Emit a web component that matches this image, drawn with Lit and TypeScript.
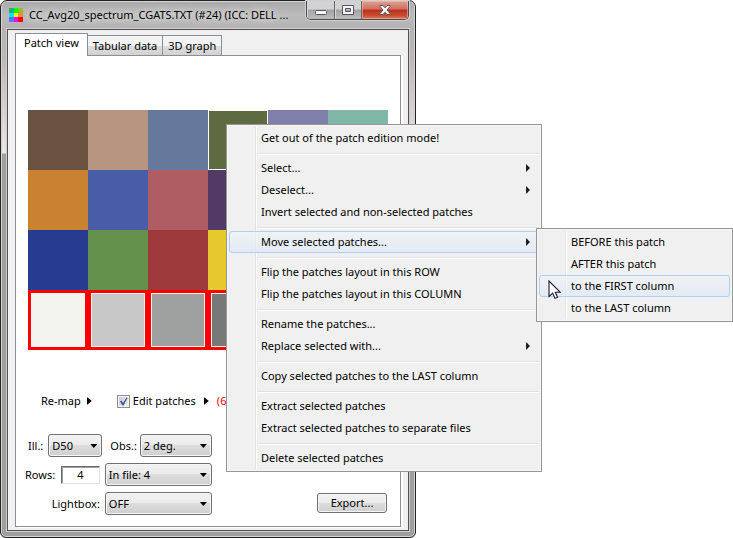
import { LitElement, html, css, svg, nothing } from "lit";
import { customElement, property } from "lit/decorators.js";
import { classMap } from "lit/directives/class-map.js";
import { styleMap } from "lit/directives/style-map.js";

interface MenuEntry {
  label: string;
  sub?: boolean;
  hot?: boolean;
  children?: MenuEntry[];
}

const MENU: MenuEntry[][] = [
  [{ label: "Get out of the patch edition mode!" }],
  [
    { label: "Select...", sub: true },
    { label: "Deselect...", sub: true },
    { label: "Invert selected and non-selected patches" },
  ],
  [
    {
      label: "Move selected patches...",
      sub: true,
      hot: true,
      children: [
        { label: "BEFORE this patch" },
        { label: "AFTER this patch" },
        { label: "to the FIRST column", hot: true },
        { label: "to the LAST column" },
      ],
    },
  ],
  [
    { label: "Flip the patches layout in this ROW" },
    { label: "Flip the patches layout in this COLUMN" },
  ],
  [{ label: "Rename the patches..." }, { label: "Replace selected with...", sub: true }],
  [{ label: "Copy selected patches to the LAST column" }],
  [{ label: "Extract selected patches" }, { label: "Extract selected patches to separate files" }],
  [{ label: "Delete selected patches" }],
];

const PATCHES: string[] = [
  "#6a5140", "#b79580", "#64799c", "#5e6b40", "#807fac", "#80b7a9",
  "#c88230", "#495ca8", "#af5d63", "#523a65", "#a1b852", "#dd9f3a",
  "#273c90", "#63914b", "#9d393b", "#e6c92c", "#b4578f", "#3085a3",
  "#f3f4ee", "#c8c8c8", "#9fa1a0", "#777978", "#535454", "#343434",
];
const CURSOR_PATCH = 3;
const FIRST_SELECTED = 18;

const baseText = css`
  :host {
    font: 11px/16px "Noto Sans", "Open Sans", sans-serif;
    color: #000;
  }
  * {
    box-sizing: border-box;
  }
  button,
  input,
  select {
    font: inherit;
    color: inherit;
    margin: 0;
  }
`;

@customElement("context-menu")
export class ContextMenu extends LitElement {
  @property({ attribute: false }) groups: MenuEntry[][] = [];

  static styles = [
    baseText,
    css`
      :host {
        display: block;
      }
      .menu {
        margin: 0;
        padding: 2px;
        list-style: none;
        border: 1px solid #979797;
        background: linear-gradient(90deg, transparent 26px, #e2e3e3 26px 27px, #fff 27px 28px, transparent 28px)
            content-box,
          #f0f0f0;
        box-shadow: inset 0 0 0 1px #f5f5f5;
      }
      .row {
        position: relative;
      }
      .sep {
        height: 8px;
        padding: 4px 0 2px 28px;
      }
      .sep hr {
        height: 2px;
        margin: 0;
        border: 0;
        border-top: 1px solid #e0e0e0;
        background: #fff;
      }
      .item {
        display: flex;
        align-items: center;
        justify-content: space-between;
        width: 100%;
        height: 22px;
        padding: 0 8px 0 31px;
        border: 1px solid transparent;
        border-radius: 3px;
        background: none;
        text-align: left;
        white-space: nowrap;
      }
      .hot {
        border-color: #aecff7;
        background: linear-gradient(rgba(241, 243, 246, 0.7), rgba(222, 232, 246, 0.7));
      }
      .arrow {
        width: 4px;
        height: 8px;
        background: #1c1c1c;
        clip-path: polygon(0 0, 100% 50%, 0 100%);
      }
      .flyout {
        position: absolute;
        top: -3px;
        left: calc(100% - 3px);
        width: 197px;
      }
      .cursor {
        position: absolute;
        left: 9px;
        top: 5px;
        width: 13px;
        height: 20px;
      }
    `,
  ];

  private entry(e: MenuEntry, nested: boolean): unknown {
    return html`<li class="row" role="none">
      <button
        type="button"
        role="menuitem"
        aria-haspopup=${e.sub ? "menu" : nothing}
        class=${classMap({ item: true, hot: !!e.hot })}
      >
        ${e.label}${e.sub ? html`<span class="arrow"></span>` : nothing}
      </button>
      ${nested && e.hot
        ? html`<svg class="cursor" viewBox="0 0 13 20" aria-hidden="true">
            <path
              d="M1 1V16.5L4.7 13.1L7 18.4L9.6 17.3L7.3 12.2H12.1Z"
              fill="#fff"
              stroke="#1a1a2a"
              stroke-width="1.1"
            />
          </svg>`
        : nothing}
      ${e.children
        ? html`<ul class="menu flyout" role="menu">
            ${e.children.map((c) => this.entry(c, true))}
          </ul>`
        : nothing}
    </li>`;
  }

  render() {
    return html`<ul class="menu" role="menu">
      ${this.groups.map(
        (g, i) => html`${i ? html`<li class="sep" role="none"><hr /></li>` : nothing}
        ${g.map((e) => this.entry(e, false))}`,
      )}
    </ul>`;
  }
}

const LOGO = ["#1cb37c", "#00ff00", "#8fc31f", "#00e5ff", "#ffff00", "#ff8a3c", "#4f7cff", "#ff00ff", "#ff0000"];

@customElement("app-root")
export class AppRoot extends LitElement {
  static styles = [
    baseText,
    css`
      :host {
        display: block;
        position: relative;
        min-height: 100vh;
        background: #fff;
      }
      .window {
        width: 100%;
        max-width: 416px;
        padding: 0 6px 6px;
        border: 1px solid #222;
        border-radius: 7px 7px 6px 6px;
        background: linear-gradient(
          #a9a9a9 0,
          #bcbcbc 14px,
          #b4b2b2 28px,
          #bdb9b9 60px,
          #ebe7e7 152px,
          #a19e9e 153px
        );
        box-shadow: inset 0 0 0 1px #d6d6d6;
      }
      .title {
        display: flex;
        align-items: flex-start;
        height: 28px;
      }
      .logo {
        width: 14px;
        height: 14px;
        margin: 7px 6px 0 2px;
        flex: none;
      }
      .caption {
        flex: 1;
        min-width: 0;
        margin: 0;
        padding-top: 6px;
        font-size: 11px;
        font-weight: 400;
        white-space: nowrap;
        text-shadow: 0 0 8px #e8e8e8, 0 0 6px #e0e0e0;
      }
      .controls {
        display: flex;
        height: 19px;
        flex: none;
        border: 1px solid #4a4a52;
        border-top: 0;
        border-radius: 0 0 5px 5px;
        overflow: hidden;
        box-shadow: 0 0 0 1px #d0d0d0;
      }
      .ctl {
        display: flex;
        align-items: center;
        justify-content: center;
        width: 28px;
        padding: 0;
        border: 0;
        border-right: 1px solid #65656c;
        background: linear-gradient(#d2d2d2 0 45%, #a3a3a5 50%, #bcbcbe);
        box-shadow: inset 1px 0 0 #d8d8d8;
      }
      .max {
        width: 27px;
      }
      .close {
        width: 46px;
        border: 0;
        background: linear-gradient(#dfa093, #cf6f5c 45%, #b8301a 50%, #cc4a30 80%, #dc7c62);
        box-shadow: inset 0 0 0 1px rgba(255, 200, 190, 0.5);
      }
      .glyph {
        width: 14px;
        height: 12px;
      }
      .client {
        padding: 3px 7px 3px;
        border: 1px solid #4f504f;
        background: #f0f0f0;
        box-shadow: 0 0 0 1px #cfcfcf;
      }
      .tabs {
        display: flex;
        align-items: flex-end;
      }
      .tab {
        height: 20px;
        padding: 0 5px;
        border: 1px solid #8c8e96;
        border-bottom: 0;
        border-left-width: 0;
        background: linear-gradient(#f3f3f3 0 50%, #dedede 50%, #d2d2d2);
        white-space: nowrap;
      }
      .tab.on {
        position: relative;
        height: 23px;
        margin-bottom: -1px;
        padding: 0 8px 4px;
        border-left-width: 1px;
        background: #fff;
      }
      .panel {
        padding: 54px 12px 11px;
        border: 1px solid #8c8e96;
        background: #fff;
        box-shadow: 2px 1px 0 #fff;
      }
      .patches {
        display: grid;
        grid-template-columns: repeat(6, 1fr);
      }
      .patch {
        aspect-ratio: 1;
      }
      .patch.current {
        border: 1px solid #fff;
      }
      .patch.selected {
        border: 3px solid #f00;
        box-shadow: inset 0 0 0 1px #f6f6f2;
      }
      .modes {
        display: flex;
        align-items: center;
        height: 16px;
        margin: 43px 0 25px 13px;
      }
      .popup {
        display: flex;
        align-items: center;
        gap: 6px;
        padding: 0;
        border: 0;
        background: none;
      }
      .popup::after {
        content: "";
        width: 5px;
        height: 8px;
        background: #000;
        clip-path: polygon(0 0, 100% 50%, 0 100%);
      }
      .options {
        gap: 0;
      }
      .edit {
        display: flex;
        align-items: center;
        gap: 3px;
        margin: 0 8px 0 25px;
      }
      .tick {
        position: relative;
        display: flex;
      }
      .check {
        appearance: none;
        width: 13px;
        height: 13px;
        border: 1px solid #8e8f8f;
        background: linear-gradient(135deg, #c4c9d0, #f4f4f6);
        box-shadow: inset 0 0 0 1px #f4f4f4;
      }
      .mark {
        position: absolute;
        inset: 0;
        width: 13px;
        height: 13px;
        pointer-events: none;
      }
      .count {
        margin-left: 8px;
        color: #f00;
      }
      .footer {
        display: flex;
        align-items: flex-end;
        justify-content: space-between;
      }
      .fields {
        display: grid;
        gap: 6px;
        width: 185px;
        margin-left: -3px;
        padding-right: 2px;
      }
      .line {
        display: flex;
        align-items: center;
        justify-content: flex-end;
        gap: 5px;
      }
      .lead {
        flex: 1;
        padding-left: 3px;
      }
      .rows {
        flex: 1;
      }
      .drop {
        position: relative;
        flex: none;
      }
      .drop::after {
        content: "";
        position: absolute;
        right: 5px;
        top: 10px;
        width: 7px;
        height: 4px;
        background: #000;
        clip-path: polygon(0 0, 100% 0, 50% 100%);
        pointer-events: none;
      }
      .sel {
        display: block;
        appearance: none;
        width: 100%;
        height: 23px;
        padding: 0 14px 0 3px;
        border: 1px solid #707070;
        border-radius: 3px;
        background: linear-gradient(#f2f2f2, #ebebeb 48%, #dddddd 50%, #cfcfcf);
        box-shadow: inset 0 0 0 1px #f6f6f6;
      }
      .s {
        width: 54px;
      }
      .m {
        width: 72px;
      }
      .l {
        width: 107px;
      }
      .obs {
        margin-left: 3px;
        flex: none;
        margin-right: -2px;
      }
      .num {
        width: 39px;
        height: 18px;
        padding: 0;
        border: 1px solid #e3e3e3;
        border-top: 1px solid #696969;
        border-left: 1px solid #696969;
        box-shadow: inset 1px 1px 0 #a0a0a0;
        text-align: center;
      }
      .export {
        width: 70px;
        height: 20px;
        padding: 0;
        margin: 0 1px 2px 0;
        border: 1px solid #707070;
        border-radius: 3px;
        background: linear-gradient(#f2f2f2, #ebebeb 48%, #dddddd 50%, #cfcfcf);
        box-shadow: inset 0 0 0 1px #f6f6f6;
        line-height: 16px;
      }
      .floating {
        position: absolute;
        left: 226px;
        top: 124px;
        width: 316px;
      }
    `,
  ];

  render() {
    return html`
      <main class="window">
        <header class="title">
          <svg class="logo" viewBox="0 0 15 15" shape-rendering="crispEdges" aria-hidden="true">
            ${LOGO.map(
              (c, i) => svg`<rect x=${(i % 3) * 5} y=${Math.floor(i / 3) * 5} width="5" height="5" fill=${c} />`,
            )}
          </svg>
          <h1 class="caption">CC_Avg20_spectrum_CGATS.TXT (#24) (ICC: DELL ...</h1>
          <div class="controls">
            <button type="button" class="ctl" aria-label="Minimize">
              <svg class="glyph" viewBox="0 0 14 12">
                <rect x="1.5" y="6.5" width="11" height="4" rx="1" fill="#f6f6f6" stroke="#555560" />
              </svg>
            </button>
            <button type="button" class="ctl max" aria-label="Maximize">
              <svg class="glyph" viewBox="0 0 14 12">
                <path
                  d="M1.5 1.5H12.5V10.5H1.5ZM4.5 4.5V7.5H9.5V4.5Z"
                  fill="#f6f6f6"
                  fill-rule="evenodd"
                  stroke="#555560"
                />
              </svg>
            </button>
            <button type="button" class="ctl close" aria-label="Close">
              <svg class="glyph" viewBox="0 0 14 12">
                <path
                  d="M2 1.5H5L7 3.8L9 1.5H12V2.5L9 6L12 9.5V10.5H9L7 8.2L5 10.5H2V9.5L5 6L2 2.5Z"
                  fill="#f6f6f6"
                  stroke="#555560"
                />
              </svg>
            </button>
          </div>
        </header>
        <section class="client">
          <div class="tabs" role="tablist">
            <button type="button" class="tab on" role="tab" aria-selected="true">Patch view</button>
            <button type="button" class="tab" role="tab">Tabular data</button>
            <button type="button" class="tab" role="tab">3D graph</button>
          </div>
          <div class="panel" role="tabpanel">
            <div class="patches">
              ${PATCHES.map(
                (c, i) => html`<div
                  class=${classMap({ patch: true, current: i === CURSOR_PATCH, selected: i >= FIRST_SELECTED })}
                  style=${styleMap({ backgroundColor: c })}
                ></div>`,
              )}
            </div>
            <div class="modes">
              <button type="button" class="popup">Re-map</button>
              <div class="edit">
                <span class="tick">
                  <input type="checkbox" class="check" id="edit" checked />
                  <svg class="mark" viewBox="0 0 13 13" aria-hidden="true">
                    <path d="M3 6.5L4.5 5.5L6 8L9.5 2.5L10.5 3L6.5 10.5H5.5Z" fill="#3f5596" />
                  </svg>
                </span>
                <label for="edit">Edit patches</label>
              </div>
              <button type="button" class="popup options" aria-label="Edit patches options"></button>
              <span class="count">(6)</span>
            </div>
            <div class="footer">
              <div class="fields">
                <div class="line">
                  <label class="lead" for="ill">Ill.:</label>
                  <span class="drop s"><select class="sel" id="ill"><option>D50</option></select></span>
                  <label class="obs" for="obs">Obs.:</label>
                  <span class="drop m"><select class="sel" id="obs"><option>2 deg.</option></select></span>
                </div>
                <div class="line">
                  <label class="rows" for="rows">Rows:</label>
                  <input class="num" id="rows" type="text" value="4" />
                  <span class="drop l">
                    <select class="sel" aria-label="Rows in file"><option>In file: 4</option></select>
                  </span>
                </div>
                <div class="line">
                  <label for="light">Lightbox:</label>
                  <span class="drop l"><select class="sel" id="light"><option>OFF</option></select></span>
                </div>
              </div>
              <button type="button" class="export">Export...</button>
            </div>
          </div>
        </section>
      </main>
      <context-menu class="floating" .groups=${MENU}></context-menu>
    `;
  }
}
